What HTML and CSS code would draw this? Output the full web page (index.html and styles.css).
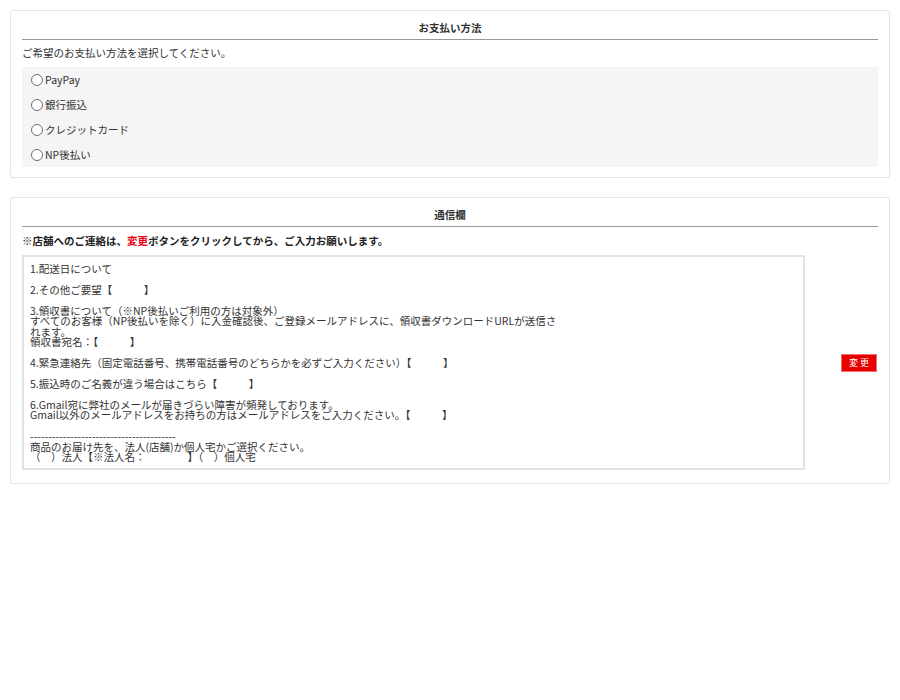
FILE: index.html
```
<!DOCTYPE html>
<html lang="ja">
<head>
    <meta charset="UTF-8">
    <title>お支払い方法</title>
    <link rel="stylesheet" href="styles.css">
</head>
<body>
    <div class="panel payment">
        <div class="panel-title">お支払い方法</div>
        <p class="lead">ご希望のお支払い方法を選択してください。</p>
        <div class="choices">
            <label class="choice"><input type="radio" name="pay"> PayPay</label>
            <label class="choice"><input type="radio" name="pay"> 銀行振込</label>
            <label class="choice"><input type="radio" name="pay"> クレジットカード</label>
            <label class="choice"><input type="radio" name="pay"> NP後払い</label>
        </div>
    </div>

    <div class="panel message">
        <div class="panel-title">通信欄</div>
        <p class="notice">※店舗へのご連絡は、<span class="red">変更</span>ボタンをクリックしてから、ご入力お願いします。</p>
        <div class="message-row">
            <textarea class="memo" readonly>
1.配送日について

2.その他ご要望【　　　】

3.領収書について（※NP後払いご利用の方は対象外）
すべてのお客様（NP後払いを除く）に入金確認後、ご登録メールアドレスに、領収書ダウンロードURLが送信さ
れます。
領収書宛名：【　　　】

4.緊急連絡先（固定電話番号、携帯電話番号のどちらかを必ずご入力ください）【　　　】

5.振込時のご名義が違う場合はこちら【　　　】

6.Gmail宛に弊社のメールが届きづらい障害が頻発しております。
Gmail以外のメールアドレスをお持ちの方はメールアドレスをご入力ください。【　　　】

----------------------------------------
商品のお届け先を、法人(店舗)か個人宅かご選択ください。
（　）法人【※法人名：　　　　】（　）個人宅</textarea>
            <button class="btn-change" type="button">変更</button>
        </div>
    </div>
</body>
</html>
```

FILE: styles.css
```
* {
    margin: 0;
    padding: 0;
    box-sizing: border-box;
}

body {
    font-family: "Noto Sans CJK JP", "Noto Sans", sans-serif;
    font-size: 10.5px;
    color: #333333;
    background: #ffffff;
    padding: 10px;
}

.panel {
    border: 1px solid #e6e6e6;
    border-radius: 3px;
    box-shadow: 0 0 2px rgba(0, 0, 0, 0.05);
    padding: 0 11px 10px;
}

.panel + .panel {
    margin-top: 19px;
}

.panel-title {
    text-align: center;
    font-weight: bold;
    line-height: 14px;
    padding: 10px 0 4px;
    border-bottom: 1px solid #999999;
}

.lead {
    line-height: 14px;
    padding: 6px 0 7px;
}

.choices {
    background: #f5f5f5;
}

.choice {
    display: flex;
    align-items: center;
    height: 25px;
    padding-left: 9px;
}

.choice input {
    appearance: none;
    -webkit-appearance: none;
    width: 12px;
    height: 12px;
    border: 1px solid #6f6f6f;
    border-radius: 50%;
    background: #ffffff;
    margin-right: 2px;
}

/* 通信欄 */
.message {
    padding-bottom: 13px;
}

.notice {
    font-weight: bold;
    color: #222222;
    line-height: 14px;
    padding: 7px 0 7px;
}

.red {
    color: #e60012;
}

.message-row {
    display: flex;
    justify-content: space-between;
    align-items: center;
}

.memo {
    width: 783px;
    height: 215px;
    border: 2px solid #e2e2e2;
    padding: 7px 6px 6px;
    font-family: "Noto Sans CJK JP", "Noto Sans", sans-serif;
    font-size: 10.5px;
    line-height: 10.45px;
    color: #333333;
    resize: none;
    overflow: hidden;
    outline: none;
}

.btn-change {
    width: 36px;
    height: 18px;
    margin-right: 1px;
    background: #e60000;
    color: #ffffff;
    border: 1px solid #f07070;
    font-family: "Noto Sans CJK JP", sans-serif;
    font-size: 9px;
    letter-spacing: 2px;
    padding-left: 2px;
}
```
